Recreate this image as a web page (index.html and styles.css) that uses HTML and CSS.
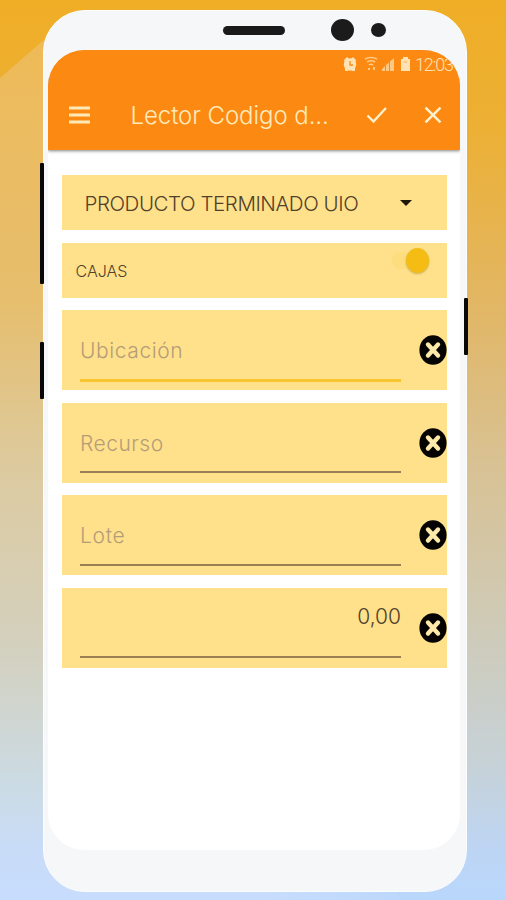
FILE: index.html
```
<!DOCTYPE html>
<html lang="es">
<head>
<meta charset="utf-8">
<title>Lector Codigo</title>
<link rel="stylesheet" href="styles.css">
</head>
<body>
<svg class="symbols" width="0" height="0">
  <symbol id="clear" viewBox="0 0 28 30">
    <ellipse cx="14" cy="15" rx="13.6" ry="14.8" fill="#050403"/>
    <path d="M9 9.500 19 20.500M19 9.500 9 20.500" stroke="#fde9a9" stroke-width="4.400" stroke-linecap="round"/>
  </symbol>
</svg>
<div class="stage">
  <div class="shade"></div>
  <div class="phone">
    <i class="key key-volume"></i>
    <i class="key key-assist"></i>
    <i class="key key-power"></i>
    <div class="bezel"><i class="speaker"></i><i class="camera"></i><i class="sensor"></i></div>
    <main class="screen">
      <header class="top">
        <div class="status">
          <svg width="68" height="18" viewBox="0 0 68 18" fill="#ffe3b4">
            <circle cx="7" cy="8.500" r="6.200"/><path d="M1 4 4 1l2 2-4 4zM13 4l-3-3-2 2 4 4zM2 12h3v3H2zM9 12h3v3H9z"/>
            <path d="M7 5v4h3" fill="none" stroke="#fc8a12" stroke-width="1.300"/>
            <g opacity=".72"><path d="M22 3q6-3 12 0M24 6q4-2.500 8 0M26 9q2-1.500 4 0" fill="none" stroke="#ffe3b4" stroke-width="1.600"/><path d="M25 12h2v2h-2zM30 11h2v3h-2z"/></g>
            <g opacity=".7"><path d="M39 15v-2l3-3v5zM43 15V9l3-2.500V15zM47 15V5.500L51 2v13z"/></g>
            <path d="M60 3V1h5v2h2v12h-9V3z"/><path d="M60.500 6h4" stroke="#fc8a12" opacity=".6"/>
          </svg>
          <span class="time">12:03</span>
        </div>
        <div class="bar">
          <svg class="menu" width="22" height="18" viewBox="0 0 22 18"><path d="M0 2h22M0 9h22M0 16h22" stroke="#ffe9b8" stroke-width="2.800"/></svg>
          <h1 class="title">Lector Codigo d...</h1>
          <svg class="check" width="22" height="18" viewBox="0 0 22 18"><path d="M1.500 9.500 7.500 15.500 20 2" fill="none" stroke="#fff0cc" stroke-width="2.400"/></svg>
          <svg class="close" width="18" height="18" viewBox="0 0 18 18"><path d="M1.500 1.500 16.500 16.500M16.500 1.500 1.500 16.500" stroke="#fff0cc" stroke-width="2.500"/></svg>
        </div>
      </header>
      <div class="form">
        <div class="card select"><span>PRODUCTO TERMINADO UIO</span><i class="caret"></i></div>
        <div class="card option"><span>CAJAS</span><div class="switch"><i></i></div></div>
        <div class="card field focused"><div class="line"><span class="ubicacion">Ubicación</span></div><svg class="clear"><use href="#clear"/></svg></div>
        <div class="card field"><div class="line"><span class="recurso">Recurso</span></div><svg class="clear"><use href="#clear"/></svg></div>
        <div class="card field"><div class="line"><span class="lote">Lote</span></div><svg class="clear"><use href="#clear"/></svg></div>
        <div class="card field amount"><div class="line"><span>0,00</span></div><svg class="clear"><use href="#clear"/></svg></div>
      </div>
    </main>
  </div>
</div>
</body>
</html>
```
FILE: styles.css
```
* { box-sizing: border-box; }
body { margin: 0; font-family: Inter, "Open Sans", sans-serif; font-weight: 300; }
.symbols { position: absolute; }
.stage {
  position: relative; width: 506px; height: 900px; overflow: hidden; padding: 9.5px 0 0 42.5px;
  background: linear-gradient(#f0ae26 0, #ecb035 130px, #e2b663 300px, #d8c295 470px, #d0c9b1 600px, #c6d2d9 770px, #bdd5f4 850px, #b9d7fc 900px);
}
.shade {
  position: absolute; inset: 0;
  background: linear-gradient(#f0b953, #ecbc60 120px, #e6be6d 300px, #dccba2 480px, #d4d0bd 640px, #cbdbe5 790px, #c8dcf8 850px, #c8ddfd);
  clip-path: polygon(0 78px, 46px 38px, 256px 400px, 400px 900px, 0 900px);
  mask-image: linear-gradient(90deg, #000 256px, transparent 440px);
}
.phone { position: relative; width: 424px; height: 882px; border-radius: 42px; background: #f5f7f9; border: 1px solid #fbfdff; padding: 0 4.5px; }
.key { position: absolute; width: 4px; background: #080808; border-radius: 1px; }
.key-volume { left: -4px; top: 152px; height: 121px; }
.key-assist { left: -4px; top: 331px; height: 57px; }
.key-power { right: -2.5px; top: 287px; height: 57px; }
.bezel { height: 39.5px; display: flex; align-items: center; padding-left: 175px; }
.speaker { width: 62px; height: 9px; border-radius: 5px; background: #1b1a1b; margin-right: 46px; }
.camera { width: 23px; height: 22px; border-radius: 50%; background: #1b1b1b; margin-right: 17px; }
.sensor { width: 15px; height: 14px; border-radius: 50%; background: #1b1b1b; }
.screen { width: 412px; height: 800px; border-radius: 36px; background: #fff; overflow: hidden; }
.top { height: 100px; background: #fc8a12; box-shadow: 0 1px 3px #555b; position: relative; }
.status { height: 30px; display: flex; align-items: center; justify-content: flex-end; padding-right: 7px; color: #ffe3b4; }
.status svg { margin-right: 4px; }
.time { width: 38px; font: 300 18px/32px Roboto, sans-serif; letter-spacing: -1.2px; white-space: nowrap; }
.bar { height: 70px; display: flex; align-items: center; padding: 0 18px 0 20.5px; }
.menu { margin-top: -1px; }
.title { width: 236px; margin: 0 0 0 40px; padding-top: 2px; font-size: 24px; font-weight: 300; letter-spacing: -.06px; line-height: 30px; color: #ffebbd; white-space: nowrap; }
.close { margin-left: 36px; }
.form { padding: 25px 13px 0 13.5px; display: grid; grid-template-rows: 55px 55px repeat(4, 80px); gap: 12.6px; }
.card { background: #fee18a; display: flex; }
.select { align-items: center; padding-left: 23px; font-size: 20.5px; letter-spacing: -.44px; color: #51402b; white-space: nowrap; }
.select span { width: 315px; padding-top: 1px; }
.caret { border: 6px solid transparent; border-top-color: #21180c; border-bottom: 0; }
.option { justify-content: space-between; padding: 6px 18px 0 14px; color: #51402b; font-size: 16px; line-height: 44px; }
.switch { width: 37px; height: 17px; margin-top: 3px; border-radius: 9px; background: #fcd97080; display: flex; justify-content: flex-end; }
.switch i { width: 23px; height: 25px; margin-top: -4px; border-radius: 50%; background: #f5bd14; box-shadow: 0 1px 2px #a8893d99; }
.field { justify-content: space-between; align-items: center; padding-left: 18.5px; }
.line { width: 321px; height: 62px; margin-bottom: 9.6px; align-self: flex-end; border-bottom: 2px solid #9b7e54; padding-top: 19.5px; font-size: 21px; line-height: 26px; color: #b59c78; }
.focused .line { border-bottom: 3px solid #f8c72f; margin-bottom: 8.5px; padding-top: 18px; }
.ubicacion { letter-spacing: .6px; }
.recurso { letter-spacing: .5px; }
.lote { letter-spacing: .7px; }
.amount .line { text-align: right; padding-top: 7.5px; color: #51402b; }
.clear { width: 28px; height: 30px; }
```
